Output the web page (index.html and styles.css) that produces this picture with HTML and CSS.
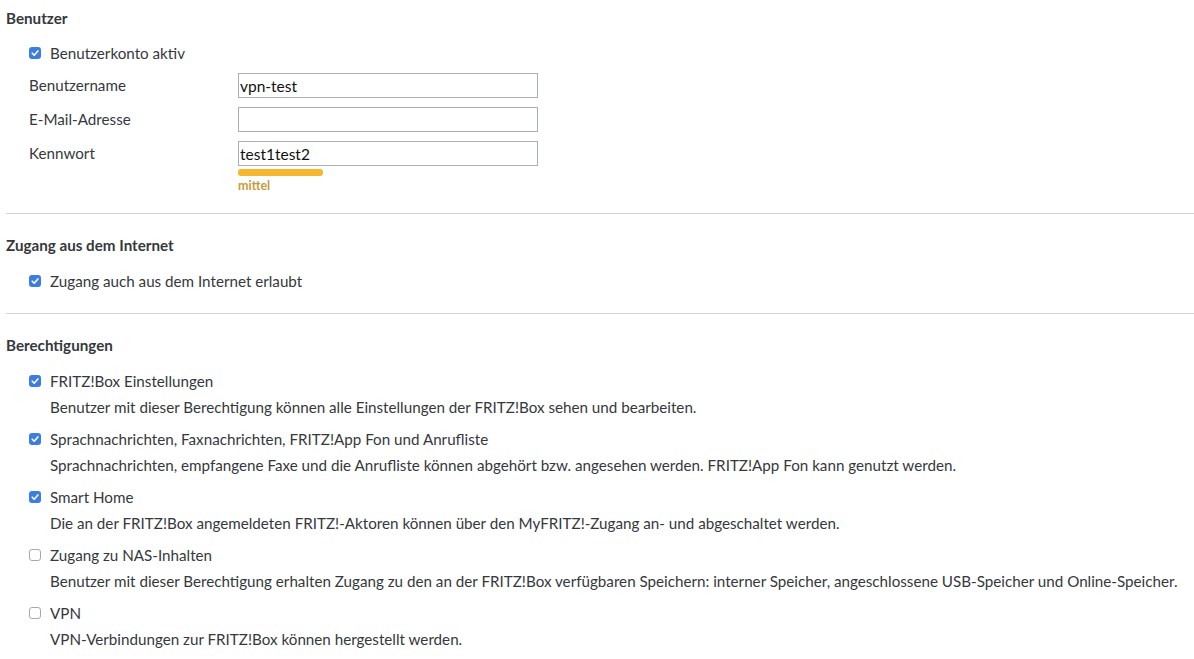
FILE: index.html
```html
<!DOCTYPE html>
<html lang="de">
<head>
  <meta charset="UTF-8" />
  <title>Benutzer</title>
  <link rel="stylesheet" href="styles.css">
</head>
<body>
  <div class="page">
    <!-- Benutzer -->
    <div class="section first">
      <h3>Benutzer</h3>
      <div class="check-row">
        <span class="box checked"><svg viewBox="0 0 12 12"><path d="M3.2 6.2 L5.2 8.2 L8.9 3.9" /></svg></span>
        <span>Benutzerkonto aktiv</span>
      </div>
      <div class="field">
        <label>Benutzername</label>
        <input type="text" value="vpn-test">
      </div>
      <div class="field">
        <label>E-Mail-Adresse</label>
        <input type="text" value="">
      </div>
      <div class="field">
        <label>Kennwort</label>
        <div class="pw">
          <input type="text" value="test1test2">
          <div class="strength"></div>
          <div class="strength-text">mittel</div>
        </div>
      </div>
    </div>

    <!-- Internet -->
    <div class="section">
      <h3>Zugang aus dem Internet</h3>
      <div class="check-row">
        <span class="box checked"><svg viewBox="0 0 12 12"><path d="M3.2 6.2 L5.2 8.2 L8.9 3.9" /></svg></span>
        <span>Zugang auch aus dem Internet erlaubt</span>
      </div>
    </div>

    <!-- Berechtigungen -->
    <div class="section last">
      <h3>Berechtigungen</h3>
      <div class="perm">
        <div class="check-row">
          <span class="box checked"><svg viewBox="0 0 12 12"><path d="M3.2 6.2 L5.2 8.2 L8.9 3.9" /></svg></span>
          <span>FRITZ!Box Einstellungen</span>
        </div>
        <p class="desc">Benutzer mit dieser Berechtigung können alle Einstellungen der FRITZ!Box sehen und bearbeiten.</p>
      </div>
      <div class="perm">
        <div class="check-row">
          <span class="box checked"><svg viewBox="0 0 12 12"><path d="M3.2 6.2 L5.2 8.2 L8.9 3.9" /></svg></span>
          <span>Sprachnachrichten, Faxnachrichten, FRITZ!App Fon und Anrufliste</span>
        </div>
        <p class="desc">Sprachnachrichten, empfangene Faxe und die Anrufliste können abgehört bzw. angesehen werden. FRITZ!App Fon kann genutzt werden.</p>
      </div>
      <div class="perm">
        <div class="check-row">
          <span class="box checked"><svg viewBox="0 0 12 12"><path d="M3.2 6.2 L5.2 8.2 L8.9 3.9" /></svg></span>
          <span>Smart Home</span>
        </div>
        <p class="desc">Die an der FRITZ!Box angemeldeten FRITZ!-Aktoren können über den MyFRITZ!-Zugang an- und abgeschaltet werden.</p>
      </div>
      <div class="perm">
        <div class="check-row">
          <span class="box"></span>
          <span>Zugang zu NAS-Inhalten</span>
        </div>
        <p class="desc">Benutzer mit dieser Berechtigung erhalten Zugang zu den an der FRITZ!Box verfügbaren Speichern: interner Speicher, angeschlossene USB-Speicher und Online-Speicher.</p>
      </div>
      <div class="perm">
        <div class="check-row">
          <span class="box"></span>
          <span>VPN</span>
        </div>
        <p class="desc">VPN-Verbindungen zur FRITZ!Box können hergestellt werden.</p>
      </div>
    </div>
  </div>
</body>
</html>
```

FILE: styles.css
```css
body {
  margin: 0;
  font-family: Lato, "Open Sans", sans-serif;
  font-size: 15.2px;
  color: #35383c;
  background: #fff;
}
.page {
  padding: 0 0 0 6px;
}
.section {
  border-bottom: 1px solid #d4d4d4;
  padding: 21px 0 22px;
}
.section h3 {
  margin-bottom: 16px;
}
.section.first {
  padding: 8px 0 18px;
}
.section.first h3 {
  margin-bottom: 15px;
}
.section.last {
  border-bottom: none;
  padding-top: 21px;
}
h3 {
  margin: 0;
  font-size: 15.2px;
  font-weight: bold;
  line-height: 20px;
}
.check-row {
  display: flex;
  align-items: center;
  height: 20px;
  padding-left: 23px;
}
.box {
  width: 10px;
  height: 10px;
  border: 1px solid #a8a8a8;
  border-radius: 3px;
  margin-right: 9px;
  background: #fff;
  display: inline-flex;
}
.box.checked {
  width: 12px;
  height: 12px;
  border: none;
  background: #3b7de0;
}
.box svg {
  width: 12px;
  height: 12px;
}
.box svg path {
  fill: none;
  stroke: #fff;
  stroke-width: 1.6;
  stroke-linecap: round;
  stroke-linejoin: round;
}
.field {
  display: flex;
  align-items: flex-start;
  padding-left: 23px;
  margin-top: 9px;
}
.check-row + .field {
  margin-top: 10px;
}
.field label {
  width: 209px;
  line-height: 25px;
}
.field input {
  width: 300px;
  height: 25px;
  box-sizing: border-box;
  border: 1px solid #a9afb3;
  padding: 0 4px 0 1px;
  margin: 0;
  font-family: inherit;
  font-size: 15.5px;
  color: #111;
}
.strength {
  width: 85px;
  height: 7px;
  background: #f5b731;
  border-radius: 3px;
  margin-top: 3px;
}
.strength-text {
  color: #c99a3a;
  font-size: 12.5px;
  font-weight: bold;
  line-height: 18px;
  margin-top: 1px;
}
.perm {
  margin-bottom: 12px;
}
.desc {
  margin: 6px 0 0 44px;
  line-height: 20px;
}
```
